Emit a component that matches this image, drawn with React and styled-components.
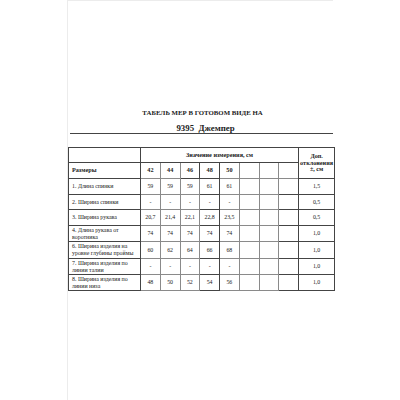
import React from "react";
import styled, { createGlobalStyle } from "styled-components";

const GlobalStyle = createGlobalStyle`
  html, body {
    margin: 0;
    padding: 0;
    background: #fff;
  }
  body {
    width: 400px;
    height: 400px;
    overflow: hidden;
    font-family: "Liberation Serif", "Times New Roman", serif;
    color: #222;
  }
`;

const Page = styled.div`
  width: 400px;
  height: 400px;
  padding-left: 67px;
  box-sizing: border-box;
`;

const Sheet = styled.div`
  width: 266px;
  height: 400px;
  box-sizing: border-box;
  border-left: 1px solid #ececec;
  border-top: 1px solid #ececec;
  padding-top: 108px;
`;

const Title = styled.div`
  text-align: center;
  font-weight: bold;
  font-size: 6.8px;
  line-height: 8px;
  padding-left: 4px;
`;

const Model = styled.div`
  margin-top: 7px;
  text-align: center;
  font-weight: bold;
  font-size: 8.8px;
  line-height: 9px;
  padding-left: 8px;
  white-space: pre;
  border-bottom: 1px solid #444;
  margin-left: 2px;
`;

const Table = styled.table`
  margin-top: 13px;
  width: 266px;
  border-collapse: collapse;
  table-layout: fixed;
  border: 1.5px solid #3a3a3a;
`;

const Cell = styled.td`
  border: 1px solid ${(p) => (p.$dark ? "#444" : "#8a8a8a")};
  height: ${(p) => p.$h || 15}px;
  padding: 0 0 0 ${(p) => (p.$left ? 3 : 0)}px;
  text-align: ${(p) => (p.$left ? "left" : "center")};
  vertical-align: middle;
  font-size: ${(p) => (p.$bold ? 6.2 : 5.9)}px;
  line-height: 6.6px;
  font-weight: ${(p) => (p.$bold ? "bold" : "normal")};
  overflow: hidden;
  box-sizing: border-box;
`;

const sizes = ["42", "44", "46", "48", "50", "", "", ""];

const rows = [
  { label: ["1. Длина спинки"], vals: ["59", "59", "59", "61", "61"], tol: "1,5", h: 16 },
  { label: ["2. Ширина спинки"], vals: ["-", "-", "-", "-", "-"], tol: "0,5", h: 15 },
  { label: ["3. Ширина рукава"], vals: ["20,7", "21,4", "22,1", "22,8", "23,5"], tol: "0,5", h: 16 },
  { label: ["4. Длина рукава от", "воротника"], vals: ["74", "74", "74", "74", "74"], tol: "1,0", h: 16 },
  { label: ["6. Ширина изделия на", "уровне глубины проймы"], vals: ["60", "62", "64", "66", "68"], tol: "1,0", h: 17 },
  { label: ["7. Ширина изделия по", "линии талии"], vals: ["-", "-", "-", "-", "-"], tol: "1,0", h: 16 },
  { label: ["8. Ширина изделия по", "линии низа"], vals: ["48", "50", "52", "54", "56"], tol: "1,0", h: 16 },
];

const Label = ({ lines }) =>
  lines.map((l, i) => (
    <React.Fragment key={i}>
      {i > 0 && <br />}
      {l}
    </React.Fragment>
  ));

export default function App() {
  return (
    <>
      <GlobalStyle />
      <Page>
        <Sheet>
          <Title>ТАБЕЛЬ МЕР В ГОТОВОМ ВИДЕ НА</Title>
          <Model>{"9395  Джемпер"}</Model>
          <Table>
            <colgroup>
              <col style={{ width: 72 }} />
              {sizes.map((_, i) => (
                <col key={i} style={{ width: 19.75 }} />
              ))}
              <col style={{ width: 36 }} />
            </colgroup>
            <tbody>
              <tr>
                <Cell $h={15} $dark />
                <Cell $h={15} $bold $dark colSpan={8}>
                  Значение измерения, см
                </Cell>
                <Cell $h={31} $bold $dark rowSpan={2}>
                  Доп.
                  <br />
                  отклонения
                  <br />
                  ±, см
                </Cell>
              </tr>
              <tr>
                <Cell $h={16} $left $bold $dark>
                  Размеры
                </Cell>
                {sizes.map((s, i) => (
                  <Cell key={i} $h={16} $bold $dark={i === 2 || i === 3}>
                    {s}
                  </Cell>
                ))}
              </tr>
              {rows.map((r, ri) => (
                <tr key={ri}>
                  <Cell $h={r.h} $left $dark>
                    <Label lines={r.label} />
                  </Cell>
                  {sizes.map((_, i) => (
                    <Cell key={i} $h={r.h} $dark={i === 3 || i === 7}>
                      {r.vals[i] || ""}
                    </Cell>
                  ))}
                  <Cell $h={r.h} $dark>
                    {r.tol}
                  </Cell>
                </tr>
              ))}
            </tbody>
          </Table>
        </Sheet>
      </Page>
    </>
  );
}
